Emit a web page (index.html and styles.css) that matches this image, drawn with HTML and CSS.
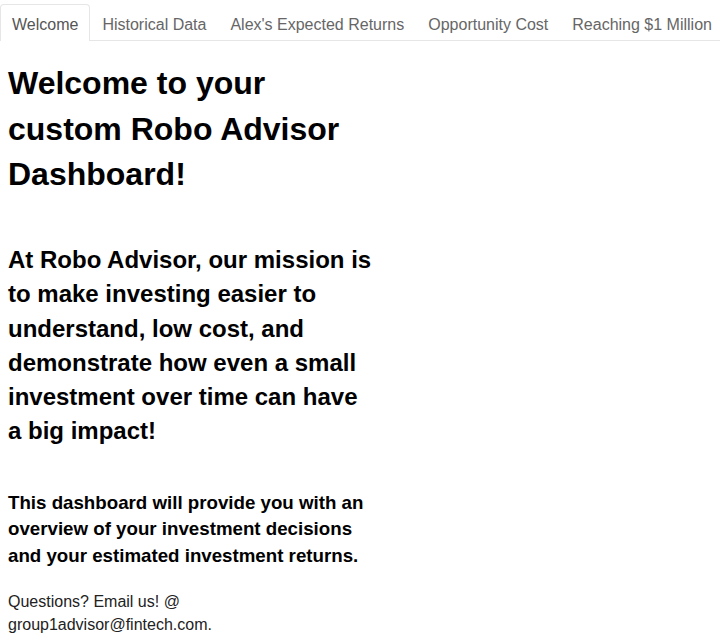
FILE: index.html
```html
<!DOCTYPE html>
<html>
<head>
<meta charset="utf-8">
<link rel="stylesheet" href="styles.css">
</head>
<body>
<div class="tabs">
  <div class="tab active">Welcome</div>
  <div class="tab">Historical Data</div>
  <div class="tab">Alex's Expected Returns</div>
  <div class="tab">Opportunity Cost</div>
  <div class="tab">Reaching $1 Million</div>
</div>
<div class="content">
  <h1 class="title">Welcome to your custom Robo Advisor Dashboard!</h1>
  <h2 class="mission">At Robo Advisor, our mission is to make investing easier to understand, low cost, and demonstrate how even a small investment over time can have a big impact!</h2>
  <h3 class="overview">This dashboard will provide you with an overview of your investment decisions and your estimated investment returns.</h3>
  <p class="contact">Questions? Email us! @ group1advisor@fintech.com.</p>
</div>
</body>
</html>
```
FILE: styles.css
```css
html, body {
  margin: 0;
  padding: 0;
  background: #fff;
}
body {
  font-family: "Liberation Sans", Arial, sans-serif;
  line-height: 1.42857;
  color: #000;
  width: 720px;
  overflow: hidden;
}
.tabs {
  display: flex;
  padding-top: 4px;
  border-bottom: 1px solid #e6e6e6;
  white-space: nowrap;
}
.tab {
  font-size: 16px;
  color: #666;
  padding: 9px 11px 4px;
  border: 1px solid transparent;
  border-bottom: none;
  border-radius: 4px 4px 0 0;
  margin-bottom: -1px;
  flex-shrink: 0;
}
.tab.active {
  color: #555;
  background: #fff;
  border-color: #e6e6e6;
}
.content {
  margin-left: 8px;
  width: 368px;
}
.title {
  font-size: 32px;
  font-weight: bold;
  margin: 20px 0 0;
}
.mission {
  font-size: 24px;
  font-weight: bold;
  margin: 45px 0 0;
}
.overview {
  font-size: 18.72px;
  font-weight: bold;
  margin: 41px 0 0;
}
.contact {
  font-size: 16px;
  color: #222;
  margin: 21px 0 0;
}
```
